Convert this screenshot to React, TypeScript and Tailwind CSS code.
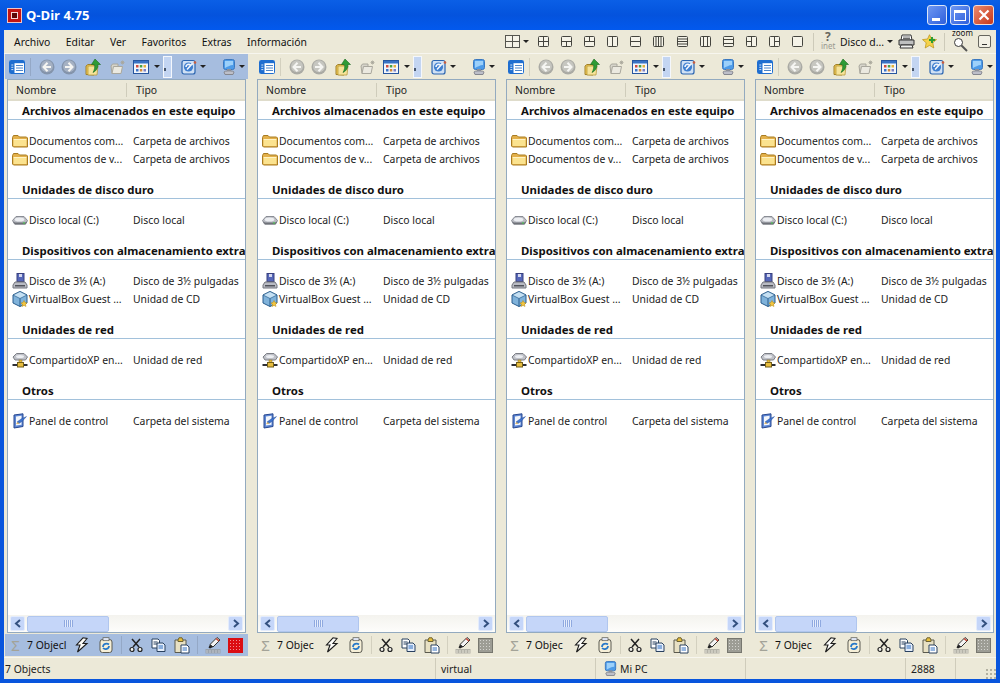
import React from "react";

const Svg = ({ w = 16, h = 16, className = "", children }: { w?: number; h?: number; className?: string; children: React.ReactNode }) => (
  <svg width={w} height={h} viewBox={`0 0 ${w} ${h}`} className={`shrink-0 block ${className}`}>{children}</svg>
);

const Folder = () => (
  <Svg>
    <path d="M0.5 4.5 L1.5 2.5 H6 L7.5 4 H14.5 L15.5 5 V14 H1.5 L0.5 13Z" fill="#e3b04a" stroke="#a87c22" strokeWidth="1" />
    <path d="M1.5 7 H14.5 V13 H1.5Z" fill="#fbe38f" />
    <path d="M1.5 6.5 H14.5" stroke="#fff3c4" />
  </Svg>
);
const Disk = () => (
  <Svg>
    <path d="M0.5 8.5 L4 4.5 H12 L15.5 8.5 L13.5 12 H2.5Z" fill="#b9bbc2" stroke="#8a8d95" />
    <ellipse cx="7.5" cy="7.5" rx="4.8" ry="2" fill="#eceef2" />
    <path d="M1 9.5 L3 12.5 H13.5 L15.5 9.5 L13 10.5 H3Z" fill="#6f7279" />
    <rect x="11" y="10.5" width="2" height="1" fill="#45d24a" />
  </Svg>
);
const Floppy = () => (
  <Svg>
    <rect x="5" y="0.5" width="7" height="8" fill="#5566b8" stroke="#39407e" />
    <rect x="7" y="1" width="3" height="3" fill="#d3d7ef" />
    <path d="M1 12 L3 9 H13 L15 12 V15 H1Z" fill="#b9bbc3" stroke="#73757d" />
    <rect x="3" y="12" width="10" height="1.5" fill="#51535a" />
  </Svg>
);
const VBox = () => (
  <Svg>
    <path d="M8 0.5 L15 4 V12 L8 15.5 L1 12 V4Z" fill="#7fb2da" stroke="#2a5d8d" />
    <path d="M1 4 L8 7.5 L15 4 L8 0.5Z" fill="#c5e0f3" stroke="#2a5d8d" strokeWidth="0.7" />
    <path d="M8 7.5 V15.5" stroke="#2a5d8d" />
    <path d="M12 9.5 L13 11.5 L15 12 L13.5 13.3 L14 15.5 L12 14.4 L10 15.5 L10.5 13.3 L9 12 L11 11.5Z" fill="#f5c63d" stroke="#b98a16" strokeWidth="0.5" />
  </Svg>
);
const NetDrive = () => (
  <Svg>
    <path d="M1 5 L4.5 1.5 H12 L15.5 5 L13.5 8 H3Z" fill="#bfc1c8" stroke="#7c7f86" />
    <ellipse cx="8" cy="4.5" rx="4" ry="1.5" fill="#eceef2" />
    <rect x="7" y="8" width="3" height="3" fill="#e7bd3f" stroke="#8d7220" strokeWidth="0.5" />
    <path d="M0.5 13 H15.5" stroke="#2d2f35" strokeWidth="2" />
    <rect x="5.5" y="10.5" width="6" height="4.5" fill="#e7bd3f" stroke="#75601b" />
  </Svg>
);
const Panel = () => (
  <Svg>
    <path d="M2 2 L11 0.8 V13.5 L2 15Z" fill="#5f88d4" stroke="#27478f" />
    <path d="M4 3.5 L9.5 2.8 V11.8 L4 12.6Z" fill="#f3f6fb" />
    <path d="M5 9 L9 6 L14.5 3.5 L10.5 8 L7 10.5Z" fill="#3d74cf" stroke="#1f4795" strokeWidth="0.4" />
    <path d="M4 11 L6 9 L7 10.5Z" fill="#e0a73b" />
  </Svg>
);

const Arrow = ({ className = "" }: { className?: string }) => <span className={`block w-0 h-0 shrink-0 border-x-[3px] border-x-transparent border-t-[3px] border-t-[#222] ${className}`} />;

const ListIcon = () => (
  <Svg>
    <rect x="0.5" y="1.5" width="15" height="13" rx="1" fill="#fff" stroke="#1f6ed0" />
    <rect x="1" y="2" width="14" height="2.2" fill="#1f6ed0" />
    <rect x="1" y="2" width="4.5" height="12" fill="#1f6ed0" />
    <path d="M2.3 6 H4.3 M2.3 8.3 H4.3 M2.3 10.6 H4.3" stroke="#cfe2f7" strokeWidth="1" />
    <path d="M7 6.5 H14 M7 9 H14 M7 11.5 H14" stroke="#4e85c8" strokeWidth="1" />
  </Svg>
);
const Nav = ({ dir, active }: { dir: "l" | "r"; active: boolean }) => (
  <Svg>
    <circle cx="8" cy="8" r="7.5" fill={active ? "#8494ab" : "#aaaaa4"} />
    <circle cx="8" cy="7.2" r="6" fill={active ? "#a5b1c3" : "#c6c6c0"} />
    <path d={dir === "l" ? "M8.5 3.8 L4.5 8 L8.5 12.2 M5 8 H12" : "M7.5 3.8 L11.5 8 L7.5 12.2 M11 8 H4"} fill="none" stroke="#f5f5f2" strokeWidth="2" />
  </Svg>
);
const UpFolder = () => (
  <Svg w={17} h={18}>
    <path d="M1 8 L3 6.5 H9 V17 L1 16.5Z" fill="#efc858" stroke="#a1812a" />
    <path d="M3 8 H13 L12 17 H3Z" fill="#f6e39a" stroke="#b3922f" strokeWidth="0.7" />
    <path d="M10 1 L15.5 6.5 H13 C13 10 11.5 13 8 14.5 C9.5 12 10 9.5 9.6 6.5 H6.5Z" fill="#2e9b35" stroke="#176a1f" strokeWidth="0.6" />
  </Svg>
);
const GrayFolder = () => (
  <Svg>
    <path d="M1 7 L2.5 5 H8 V14.5 H2Z" fill="#d6d4ca" stroke="#a9a79d" />
    <path d="M3.5 7.5 H12.5 L11 14.5 H2Z" fill="#ebe9e0" stroke="#a9a79d" />
    <path d="M12.5 1.5 V5.5 M10.5 3.5 H14.5 M11 2 L14 5 M14 2 L11 5" stroke="#a8a69a" strokeWidth="0.8" />
  </Svg>
);
const ViewIcon = () => (
  <Svg>
    <rect x="0.5" y="1.5" width="15" height="13" fill="#f3f6fb" stroke="#27569f" />
    <rect x="1" y="2" width="14" height="2.5" fill="#3973c4" />
    <rect x="3" y="6" width="2.5" height="2.5" fill="#d34a3c" />
    <rect x="6.8" y="6" width="2.5" height="2.5" fill="#48a24a" />
    <rect x="10.5" y="6" width="2.5" height="2.5" fill="#e6b23a" />
    <rect x="3" y="10" width="2.5" height="2.5" fill="#3d74c9" />
    <rect x="6.8" y="10" width="2.5" height="2.5" fill="#d38a3a" />
    <rect x="10.5" y="10" width="2.5" height="2.5" fill="#7d7fc4" />
  </Svg>
);
const Slider = () => (
  <div className="relative w-[9px] h-[22px] bg-[#c3d5f2] border border-[#f4f7fc] shrink-0 ml-[3px]">
    <span className="absolute left-0 top-[11px] w-[2px] h-[3px] bg-[#46556c]" />
  </div>
);
const WebIcon = () => (
  <Svg>
    <rect x="1" y="1.5" width="13" height="13.5" rx="2" fill="#cfe0f4" stroke="#2a64b0" strokeWidth="1.2" />
    <circle cx="7.5" cy="8" r="4.6" fill="#3f7fd0" />
    <path d="M5 8 C5 5.5 8 4.8 9.5 6 M6 10.5 L11.5 4.5" stroke="#f1f6fd" strokeWidth="1.6" fill="none" />
    <circle cx="14" cy="3.5" r="1.3" fill="#cf5d3a" />
  </Svg>
);
const PcIcon = ({ size = 16 }: { size?: number }) => (
  <svg width={size} height={size} viewBox="0 0 16 16" className="shrink-0 block">
    <rect x="2.5" y="0.5" width="11" height="10" rx="2" fill="#4d9be8" stroke="#3b78bf" />
    <path d="M4 2 H12 V6 C9 6 6 8 4 9Z" fill="#9cd0fa" />
    <path d="M3 13 C3 11.5 13 11.5 13 13 L12 15.5 H4Z" fill="#bdbfc9" stroke="#85878f" />
    <rect x="6" y="10" width="4" height="2" fill="#8d9099" />
  </svg>
);
const Sigma = () => <span className="w-[11px] text-center text-[15px] leading-none text-[#a3a398] shrink-0">Σ</span>;
const Bolt = () => (
  <Svg w={14} h={16}>
    <path d="M8 0.8 L1.5 8 H5 L2.5 15 L12 6.5 H8 L12 1.5 Z" fill="#fdfdfa" stroke="#1c1c1c" strokeWidth="1.1" />
  </Svg>
);
const SyncIcon = () => (
  <Svg>
    <rect x="2" y="2.5" width="12" height="13" rx="2.5" fill="#f6efd7" stroke="#5a5a52" />
    <rect x="5" y="0.7" width="6" height="3" fill="#dfe6f5" stroke="#5a5a52" strokeWidth="0.7" />
    <path d="M5 10 C5 6.5 9 6 11 7.5 M11 9 C11 12 7 13 5 11" stroke="#2678c9" strokeWidth="1.7" fill="none" />
  </Svg>
);
const Cut = () => (
  <Svg w={14} h={15}>
    <path d="M3 1 L10 9 M11 1 L4 9" stroke="#222" strokeWidth="1.5" />
    <circle cx="3" cy="11.5" r="2" fill="#f5f5f0" stroke="#222" strokeWidth="1.2" />
    <circle cx="11" cy="11.5" r="2" fill="#f5f5f0" stroke="#222" strokeWidth="1.2" />
  </Svg>
);
const Copy = () => (
  <Svg w={15} h={14}>
    <path d="M1 1 H7 L8.5 2.5 V10 H1Z" fill="#fff" stroke="#28405f" />
    <path d="M2.5 4 H6.5 M2.5 6 H6.5" stroke="#28405f" />
    <path d="M6 5 H12 L14 7 V13.5 H6Z" fill="#e5eefb" stroke="#28405f" />
    <path d="M7.5 8 H12 M7.5 10 H12" stroke="#2e6ec0" />
  </Svg>
);
const Paste = () => (
  <Svg h={17}>
    <path d="M1 3 H12 V15.5 H1Z" fill="#e8e1c4" stroke="#5b5a4e" />
    <path d="M4 3 L5 0.8 H8 L9 3 V4.5 H4Z" fill="#e7bf3b" stroke="#6d6232" />
    <path d="M7 8 H13 L15 10 V16 H7Z" fill="#fff" stroke="#29405f" />
    <path d="M8.5 11 H13 M8.5 13 H13" stroke="#2e6ec0" />
  </Svg>
);
const Eraser = ({ active }: { active: boolean }) => (
  <Svg w={16} h={18}>
    <path d="M12 1.5 L15 4 L8 11 L5 8.5Z" fill="#f4f4f4" stroke="#333" />
    <path d="M11 2.5 L14 5" stroke="#c84635" strokeWidth="1.6" />
    <path d="M5 8.5 L8 11 L5 12.5 L3.5 11.5Z" fill="#222" />
    <rect x="0.5" y="13" width="15" height="4.5" fill={active ? "#9aa2ac" : "#b3b2a8"} />
    <path d="M2 14 V17 M5 14 V17 M8 14 V17 M11 14 V17 M14 14 V17" stroke={active ? "#c0c6cf" : "#e4e2d6"} />
  </Svg>
);
const Dotted = ({ active }: { active: boolean }) => (
  <div className={`w-[15px] h-[15px] shrink-0 border ${active ? "border-[#d70f14] bg-[#dc0c12]" : "border-[#77776f] bg-[#9d9d95]"} bg-[radial-gradient(rgba(255,255,255,0.55)_0.5px,transparent_0.8px)] bg-[length:3px_3px]`} />
);

const Group = ({ title }: { title: string }) => (
  <div className="mt-[13px] mb-3 h-[18px] border-b border-[#a2c1db] pl-[14px] font-bold text-[11.4px] text-[#111] leading-[17px] overflow-hidden whitespace-nowrap first:mt-[1px]">{title}</div>
);
const Row = ({ icon, name, type }: { icon: React.ReactNode; name: string; type: string }) => (
  <div className="flex items-center h-[18px] whitespace-nowrap text-[#222]">
    <div className="w-[21px] pl-[4px] shrink-0">{icon}</div>
    <div className="w-[104px] shrink-0">{name}</div>
    <div>{type}</div>
  </div>
);

const ScrollBtn = ({ dir }: { dir: "l" | "r" }) => (
  <div className="w-[15px] h-[15px] rounded-[2px] bg-[#c5d6f9] border border-[#e4ecfc] flex items-center justify-center shrink-0">
    <svg width="8" height="9" viewBox="0 0 8 9">
      <path d={dir === "l" ? "M6 1 L2 4.5 L6 8" : "M2 1 L6 4.5 L2 8"} fill="none" stroke="#33507f" strokeWidth="2" />
    </svg>
  </div>
);

const Pane = ({ active = false, width }: { active?: boolean; width: string }) => (
  <div className={`${width} shrink-0`}>
    <div className="w-[243px] h-full flex flex-col">
      <div className={`h-[25px] flex items-center shrink-0 pl-[4px] ${active ? "bg-[#a6bddf]" : "bg-[#ece9d8]"}`}>
        <ListIcon />
        <div className={`w-px h-[18px] ml-[5px] ${active ? "bg-[#94a8c6]" : "bg-[#d3d0bf]"}`} />
        <div className="ml-[8px]"><Nav dir="l" active={active} /></div>
        <div className="ml-[6px]"><Nav dir="r" active={active} /></div>
        <div className="ml-[8px]"><UpFolder /></div>
        <div className="ml-[8px]"><GrayFolder /></div>
        <div className="ml-[7px]"><ViewIcon /></div>
        <Arrow className="ml-[5px]" />
        <Slider />
        <div className="ml-[9px]"><WebIcon /></div>
        <Arrow className="ml-[3px]" />
        <div className="ml-[15px]"><PcIcon /></div>
        <Arrow className="ml-[2px]" />
      </div>
      <div className="flex-1 mx-[2px] border border-[#93aabf] bg-white flex flex-col min-h-0">
        <div className="h-[21px] shrink-0 flex items-center bg-[#ebe8d8] border-b-2 border-[#dfdccb] text-[#222]">
          <div className="w-[119px] pl-[8px] border-r border-[#cfccbb]">Nombre</div>
          <div className="pl-[9px]">Tipo</div>
        </div>
        <div className="flex-1 min-h-0 overflow-hidden">
          <Group title="Archivos almacenados en este equipo" />
          <Row icon={<Folder />} name="Documentos com..." type="Carpeta de archivos" />
          <Row icon={<Folder />} name="Documentos de v..." type="Carpeta de archivos" />
          <Group title="Unidades de disco duro" />
          <Row icon={<Disk />} name="Disco local (C:)" type="Disco local" />
          <Group title="Dispositivos con almacenamiento extra" />
          <Row icon={<Floppy />} name="Disco de 3½ (A:)" type="Disco de 3½ pulgadas" />
          <Row icon={<VBox />} name="VirtualBox Guest ..." type="Unidad de CD" />
          <Group title="Unidades de red" />
          <Row icon={<NetDrive />} name="CompartidoXP en..." type="Unidad de red" />
          <Group title="Otros" />
          <Row icon={<Panel />} name="Panel de control" type="Carpeta del sistema" />
        </div>
        <div className="h-[17px] shrink-0 flex items-center pl-[2px] pr-[2px] bg-gradient-to-b from-[#f4f3ee] to-[#fdfdfb]">
          <ScrollBtn dir="l" />
          <div className="w-[82px] h-[16px] ml-[2px] rounded-[2px] border border-[#b0c6ee] bg-[#c5d6f9] flex items-center justify-center">
            <div className="w-[9px] h-[7px] bg-[repeating-linear-gradient(90deg,#8fa9e0_0_1px,#e4ecfc_1px_2px)]" />
          </div>
          <div className="flex-1" />
          <ScrollBtn dir="r" />
        </div>
      </div>
      <div className={`h-[22px] mt-px mb-px flex items-center shrink-0 pl-[5px] ${active ? "bg-[#a6bddf]" : "bg-[#ece9d8]"}`}>
        <Sigma />
        <div className={`${active ? "w-[40px]" : "w-[37px]"} ml-[6px] whitespace-nowrap text-[#111]`}>{active ? "7 Objecl" : "7 Objec"}</div>
        <div className={active ? "ml-[8px]" : "ml-[11px]"}><Bolt /></div>
        <div className="ml-[9px]"><SyncIcon /></div>
        <div className={`w-px h-[18px] ml-[7px] ${active ? "bg-[#94a8c6]" : "bg-[#d3d0bf]"}`} />
        <div className="ml-[7px]"><Cut /></div>
        <div className="ml-[8px]"><Copy /></div>
        <div className="ml-[8px]"><Paste /></div>
        <div className={`w-px h-[18px] ml-[7px] ${active ? "bg-[#94a8c6]" : "bg-[#d3d0bf]"}`} />
        <div className="ml-[7px]"><Eraser active={active} /></div>
        <div className="ml-[7px]"><Dotted active={active} /></div>
      </div>
    </div>
  </div>
);

const layouts: string[] = [
  "M0.5 5.5 H10.5 M5.5 0.5 V10.5",
  "M0.5 5.5 H10.5 M5.5 5.5 V10.5",
  "M0.5 5.5 H10.5 M5.5 0.5 V5.5",
  "M5.5 0.5 V10.5",
  "M0.5 5.5 H10.5",
  "M3 0.5 V10.5 M5.5 0.5 V10.5 M8 0.5 V10.5",
  "M0.5 3 H10.5 M0.5 5.5 H10.5 M0.5 8 H10.5",
  "M3.5 0.5 V10.5 M7.5 0.5 V10.5",
  "M0.5 3.5 H10.5 M0.5 7.5 H10.5",
  "M5.5 0.5 V10.5 M0.5 5.5 H5.5",
  "M5.5 0.5 V10.5 M5.5 5.5 H10.5",
  "",
];
const Layout = ({ d }: { d: string }) => (
  <svg width="11" height="11" viewBox="0 0 11 11" className="shrink-0 block">
    <rect x="0.5" y="0.5" width="10" height="10" fill="#f5f3e8" stroke="#45453f" rx="1" />
    {d && <path d={d} stroke="#45453f" fill="none" />}
  </svg>
);

export default function App() {
  return (
    <div className="w-[1000px] h-[683px] flex flex-col overflow-hidden bg-[#0855dd] text-[10.4px] leading-[14px] font-['Noto_Sans','Open_Sans',sans-serif]">
      <div className="h-[30px] shrink-0 flex items-center pl-[7px] pr-[6px] bg-gradient-to-b from-[#0b5fe6] via-[#0453dd] to-[#0259ee]">
        <div className="w-[15px] h-[15px] bg-[#c21414] border border-[#f0c4c4] flex items-center justify-center">
          <div className="w-[7px] h-[7px] border border-[#f4d6d6] bg-[#5c0808]" />
        </div>
        <div className="ml-[4px] text-[13px] font-bold text-white font-['Open_Sans',sans-serif]">Q-Dir 4.75</div>
        <div className="flex-1" />
        <div className="w-[20px] h-[20px] rounded-[3px] border border-[#dce6f8] bg-[linear-gradient(135deg,#6f98f2,#2e5fdc)] flex items-end pl-[4px] pb-[3px]">
          <div className="w-[8px] h-[3px] bg-white" />
        </div>
        <div className="ml-[3px] w-[20px] h-[20px] rounded-[3px] border border-[#dce6f8] bg-[linear-gradient(135deg,#6f98f2,#2e5fdc)] flex items-center justify-center">
          <div className="w-[12px] h-[11px] border border-white border-t-[3px]" />
        </div>
        <div className="ml-[3px] w-[21px] h-[20px] rounded-[3px] border border-[#f3dcd5] bg-[linear-gradient(135deg,#e98a6e,#c8371a)] flex items-center justify-center">
          <svg width="12" height="12" viewBox="0 0 12 12"><path d="M1.5 1.5 L10.5 10.5 M10.5 1.5 L1.5 10.5" stroke="#fff" strokeWidth="2.2" /></svg>
        </div>
      </div>
      <div className="flex-1 mx-[4px] mb-[4px] flex flex-col min-h-0 bg-[#ece9d8]">
        <div className="h-[24px] shrink-0 flex items-center text-[#111] bg-[#ece9d8] border-b border-[#f7f6ef]">
          <div className="flex items-center pl-[10px] gap-[15.4px]">
            <span>Archivo</span><span>Editar</span><span>Ver</span><span>Favoritos</span><span>Extras</span><span>Información</span>
          </div>
          <div className="flex-1" />
          <div className="flex items-center pr-[5px]">
            <svg width="15" height="13" viewBox="0 0 15 13" className="shrink-0"><rect x="0.5" y="0.5" width="14" height="12" fill="#f5f3e8" stroke="#55554f" /><path d="M0.5 6.5 H14.5 M7.5 0.5 V12.5" stroke="#55554f" /></svg>
            <Arrow className="ml-[3px]" />
            <div className="ml-[9px] flex items-center gap-[12.1px]">
              {layouts.map((d, i) => <Layout key={i} d={d} />)}
            </div>
            <div className="w-px h-[18px] ml-[10px] bg-[#cdcab9]" />
            <div className="relative ml-[7px] w-[15px] h-[17px] shrink-0">
              <span className="absolute left-[4px] top-[-1px] font-bold text-[12px] leading-[9px] text-[#66665f]">?</span>
              <span className="absolute left-0 top-[8px] text-[8px] leading-[9px] text-[#9a9a90]">inet</span>
            </div>
            <span className="ml-[4px] whitespace-nowrap text-[#111]">Disco d...</span>
            <Arrow className="ml-[3px]" />
            <svg width="17" height="15" viewBox="0 0 17 15" className="ml-[5px] shrink-0">
              <path d="M4 1 H13 L14 6 H3Z" fill="#fff" stroke="#333" />
              <path d="M1 6 H16 V11 H1Z" fill="#bfc0c0" stroke="#333" />
              <path d="M3 11 H14 L15 14 H2Z" fill="#f1f1ef" stroke="#333" />
              <path d="M5 3 H12 M5 4.5 H12" stroke="#6a6a6a" />
            </svg>
            <svg width="15" height="15" viewBox="0 0 15 15" className="ml-[7px] shrink-0">
              <path d="M7.5 0.7 L9.5 5 L14.5 5.6 L10.8 8.8 L11.8 14 L7.5 11.4 L3.2 14 L4.2 8.8 L0.5 5.6 L5.5 5Z" fill="#f5d24b" stroke="#b89116" strokeWidth="0.7" />
              <path d="M9 3 H11 V5 H13 V7 H11 V9 H9 V7 H7 V5 H9Z" fill="#2c9d33" />
            </svg>
            <div className="w-px h-[18px] ml-[7px] bg-[#cdcab9]" />
            <div className="relative ml-[7px] w-[18px] h-[20px] shrink-0">
              <span className="absolute left-0 top-[-3px] text-[8px] leading-[8px] text-[#111]">zoom</span>
              <svg width="16" height="15" viewBox="0 0 16 15" className="absolute left-[1px] top-[5px]">
                <circle cx="5.5" cy="5.5" r="4" fill="#fff" stroke="#3a3a3a" />
                <path d="M8.5 8.5 L14 14" stroke="#555" strokeWidth="2" />
              </svg>
            </div>
            <div className="ml-[8px] w-[13px] h-[13px] rounded-[2px] border border-[#66665f] bg-[#f3f1e6] flex items-end justify-center pb-[2px]">
              <div className="w-[5px] h-px bg-[#333]" />
            </div>
          </div>
        </div>
        <div className="h-[603px] shrink-0 flex pl-px">
          <Pane active width="w-[250px]" />
          <Pane width="w-[249px]" />
          <Pane width="w-[249px]" />
          <Pane width="w-[243px]" />
        </div>
        <div className="flex-1 flex items-center text-[#222] border-t border-[#f7f6ef]">
          <div className="w-[431px] pl-[1px] h-full flex items-center">7 Objects</div>
          <div className="w-[160px] pl-[5px] h-full flex items-center border-l border-[#cfccbb]">virtual</div>
          <div className="w-[150px] pl-[7px] h-full flex items-center gap-[2px] border-l border-[#cfccbb]"><PcIcon size={15} />Mi PC</div>
          <div className="w-[160px] h-full border-l border-[#cfccbb]" />
          <div className="w-[50px] pl-[5px] h-full flex items-center border-l border-[#cfccbb]">2888</div>
          <div className="flex-1 h-full border-l border-[#cfccbb] flex items-end justify-end">
            <div className="w-[11px] h-[11px] bg-[radial-gradient(#b3b1a1_1px,transparent_1.2px)] bg-[length:4px_4px]" />
          </div>
        </div>
      </div>
    </div>
  );
}
